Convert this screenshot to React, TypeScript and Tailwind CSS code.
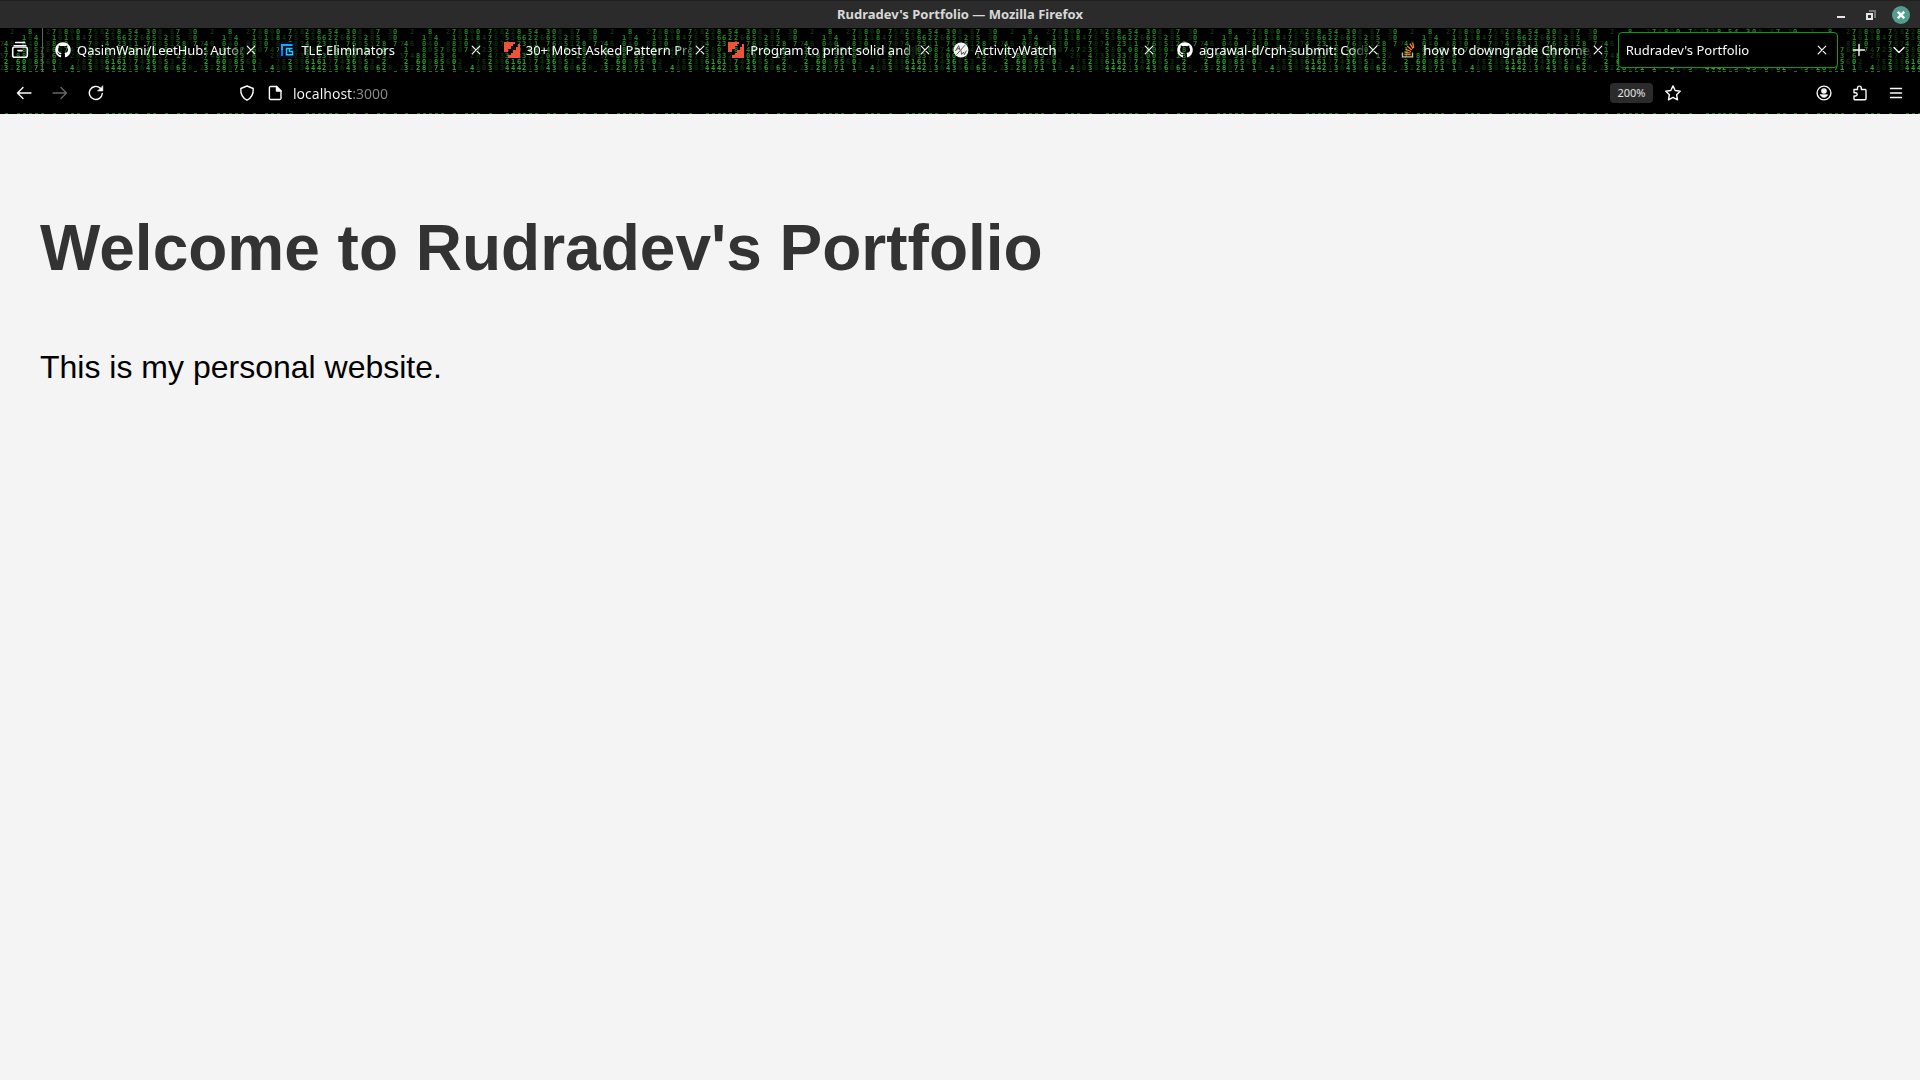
import React from "react";
import { FaGithub } from "react-icons/fa";

const STEP = 6;

/* Digit rain: one entry per column, "x" position, digits from top to bottom, brightness. */
const rain: { x: number; digits: string; dim?: boolean }[] = [
  { x: 0, digits: "  7 5 2", dim: true },
  { x: 6, digits: "  41723" },
  { x: 12, digits: "2 6 4 2", dim: true },
  { x: 18, digits: "    862" },
  { x: 24, digits: " 108808" },
  { x: 30, digits: "8      " },
  { x: 30, digits: " 640 00", dim: true },
  { x: 36, digits: " 405587" },
  { x: 42, digits: "   7351" },
  { x: 48, digits: "2 86 6 ", dim: true },
  { x: 54, digits: "7186601" },
  { x: 60, digits: "6630 26", dim: true },
  { x: 66, digits: "8107   " },
  { x: 72, digits: "01 42  ", dim: true },
  { x: 72, digits: "      4" },
  { x: 78, digits: "08 7   " },
  { x: 78, digits: "  6 678", dim: true },
  { x: 84, digits: " 4 2 60", dim: true },
  { x: 90, digits: "7773423" },
  { x: 96, digits: "5585738", dim: true },
  { x: 102, digits: "8 7 383", dim: true },
  { x: 107, digits: "2545364" },
  { x: 113, digits: "     14" },
  { x: 113, digits: "25 86  ", dim: true },
  { x: 119, digits: "8620364" },
  { x: 124, digits: " 63 312" },
  { x: 130, digits: "52 0   " },
  { x: 130, digits: "  1 271", dim: true },
  { x: 136, digits: "4218873" },
  { x: 142, digits: " 6 7246", dim: true },
  { x: 148, digits: "3674034" },
  { x: 154, digits: "0560063" },
  { x: 160, digits: "8680268", dim: true },
  { x: 166, digits: " 250756" },
  { x: 172, digits: "6814 30", dim: true },
  { x: 178, digits: "752 1 6" },
  { x: 184, digits: "  88322" },
  { x: 190, digits: "35  2 8", dim: true },
  { x: 195, digits: "007    " },
];

function DigitRain() {
  return (
    <svg className="absolute inset-0 size-full" aria-hidden="true">
      <defs>
        <pattern id="rain" width="200" height="86" patternUnits="userSpaceOnUse">
          <g fontFamily="'DejaVu Sans Mono', monospace" fontSize="7" fontWeight="700" textAnchor="middle">
            {rain.map((col, i) =>
              col.digits.split("").map((d, row) =>
                d === " " ? null : (
                  <text
                    key={`${i}-${row}`}
                    x={col.x || 2}
                    y={6 + row * STEP}
                    fill={col.dim ? "#0c300c" : row > 4 ? "#2aa32e" : "#208426"}
                  >
                    {d}
                  </text>
                ),
              ),
            )}
            {rain
              .filter((c) => !c.dim)
              .map((c) => (
                <g key={c.x} fill="#1c6f20">
                  <rect x={c.x - 1} y="43" width="3" height="1" />
                  <rect x={c.x - 1} y="85" width="3" height="1" />
                </g>
              ))}
          </g>
        </pattern>
      </defs>
      <rect width="100%" height="100%" fill="url(#rain)" />
    </svg>
  );
}

type IconProps = { size?: number; children: React.ReactNode; className?: string };

function Icon({ size = 16, children, className }: IconProps) {
  return (
    <svg
      width={size}
      height={size}
      viewBox={`0 0 ${size} ${size}`}
      fill="none"
      stroke="currentColor"
      strokeWidth="1.4"
      strokeLinecap="round"
      strokeLinejoin="round"
      className={className}
      aria-hidden="true"
    >
      {children}
    </svg>
  );
}

const CloseIcon = () => (
  <Icon size={10}>
    <path d="M1.2 1.2l7.6 7.6M8.8 1.2L1.2 8.8" strokeWidth="1.2" />
  </Icon>
);

const TleIcon = () => (
  <svg width="16" height="16" viewBox="0 0 16 16" aria-hidden="true">
    <rect width="16" height="16" rx="1" fill="#060b2c" />
    <path d="M2 3h11.500M3 3v10.500" stroke="#18a8ee" strokeWidth="2" fill="none" />
    <path d="M13.500 6.500H7.500v6.200h6V9.500H10.500V6.500" stroke="#1fd0f0" strokeWidth="1.500" fill="none" />
    <path d="M2 14V8h2v6z" fill="#1670f0" />
  </svg>
);

const StepsIcon = () => (
  <svg width="16" height="16" viewBox="0 0 16 16" aria-hidden="true">
    <path d="M0 0h11v2H9v2H7v3H4v3H0z" fill="#f1503a" />
    <path d="M16 16H4v-3h3v-2h2V8h3V5h2V2h2z" fill="#f1503a" />
  </svg>
);

const WatchIcon = () => (
  <svg width="16" height="16" viewBox="0 0 16 16" aria-hidden="true">
    <circle cx="8" cy="8" r="7.5" fill="#f4f4f4" />
    <path
      d="M2.5 9l3.2-5.4L6.8 8M3.6 7.2l3-.8M12 3.2L3.6 12.6M8 8.5l.6 4 2-2.4.8 2.6 2-4.2"
      stroke="#333"
      strokeWidth=".8"
      fill="none"
    />
  </svg>
);

const StackIcon = () => (
  <svg width="16" height="16" viewBox="0 0 16 16" fill="none" aria-hidden="true">
    <path d="M1.5 10.5v4.3h10v-4.3" stroke="#bcbbbb" strokeWidth="1.3" />
    <path
      d="M3.4 12.6h6.2M3.5 10.1l6.1 1M4.4 7.2l5.7 2.3M6.2 4.2l4.7 3.8M8.8 1.7l3.3 5M11.7.5l1 5.5"
      stroke="#f48024"
      strokeWidth="1.3"
    />
  </svg>
);

const GithubIcon = () => <FaGithub size={16} color="#ffffff" aria-hidden="true" />;

const tabs: { title: string; icon?: () => React.ReactElement; active?: boolean }[] = [
  { title: "QasimWani/LeetHub: Autom", icon: GithubIcon },
  { title: "TLE Eliminators", icon: TleIcon },
  { title: "30+ Most Asked Pattern Pro", icon: StepsIcon },
  { title: "Program to print solid and h", icon: StepsIcon },
  { title: "ActivityWatch", icon: WatchIcon },
  { title: "agrawal-d/cph-submit: Code", icon: GithubIcon },
  { title: "how to downgrade Chrome", icon: StackIcon },
  { title: "Rudradev's Portfolio", active: true },
];

function TitleBar() {
  return (
    <header className="relative flex h-7 items-center justify-center border-t border-[#1f1f1f] bg-[#2b2b2b] text-[13px] font-bold text-[#d8d8d8]">
      <h2>Rudradev's Portfolio — Mozilla Firefox</h2>
      <div className="absolute inset-y-0 right-[10px] flex items-center gap-3">
        <button aria-label="Minimize" className="flex size-[18px] items-center justify-center">
          <svg width="10" height="10" aria-hidden="true">
            <rect x="1" y="6" width="8" height="2" fill="#e6e6e6" />
          </svg>
        </button>
        <button aria-label="Restore" className="flex size-[18px] items-center justify-center">
          <svg width="10" height="10" fill="none" aria-hidden="true">
            <path d="M3 1h6v6H8" stroke="#777" strokeWidth="2" />
            <rect x="1" y="4" width="5" height="5" fill="#2b2b2b" stroke="#e6e6e6" strokeWidth="2" />
          </svg>
        </button>
        <button aria-label="Close window" className="flex size-[18px] items-center justify-center rounded-full bg-[#539d8f]">
          <svg width="8" height="8" stroke="#fff" strokeWidth="2.4" aria-hidden="true">
            <path d="M.8.8l6.4 6.4M7.2.8L.8 7.2" />
          </svg>
        </button>
      </div>
    </header>
  );
}

function TabStrip() {
  return (
    <div className="relative flex h-11 items-center">
      <button aria-label="Recent browsing" className="flex h-9 w-10 shrink-0 items-center justify-center">
        <Icon size={18}>
          <path d="M4.5 1.5h9" />
          <path d="M3 4.5h12" strokeWidth="1.2" />
          <rect x="1.7" y="6" width="14.6" height="10.3" rx="2" strokeWidth="1.6" />
          <path d="M7 9.6h4" strokeWidth="1.6" />
        </Icon>
      </button>
      <div className="mx-0.5 h-full w-px bg-[#5c665c]" />
      <div role="tablist" className="flex min-w-0 flex-1">
        {tabs.map((tab) => (
          <div key={tab.title} className="min-w-0 flex-1 px-0.5">
            <div
              className={
                tab.active
                  ? "flex h-9 items-center rounded border border-[#0e9a0e] bg-black pr-[10px] pl-[7px]"
                  : "flex h-9 items-center pr-[11px] pl-2"
              }
            >
              <button role="tab" aria-selected={!!tab.active} className="flex min-w-0 flex-1 items-center gap-1.5 text-left">
                {tab.icon && (
                  <span className="shrink-0">
                    <tab.icon />
                  </span>
                )}
                <span className="min-w-0 flex-1 overflow-hidden mask-r-from-[calc(100%-20px)] mask-r-to-100% pt-0.5 whitespace-nowrap">
                  {tab.title}
                </span>
              </button>
              <button aria-label={`Close ${tab.title}`} className="shrink-0">
                <CloseIcon />
              </button>
            </div>
          </div>
        ))}
      </div>
      <button aria-label="New tab" className="flex h-9 w-[38px] shrink-0 items-center justify-center">
        <Icon size={14}>
          <path d="M7 1.5v11M1.5 7h11" />
        </Icon>
      </button>
      <button aria-label="List all tabs" className="flex h-9 w-[42px] shrink-0 items-center justify-center">
        <Icon size={14}>
          <path d="M2 4.5l5 5 5-5" />
        </Icon>
      </button>
    </div>
  );
}

function ToolButton({ label, children, muted }: { label: string; children: React.ReactNode; muted?: boolean }) {
  return (
    <button
      aria-label={label}
      className={
        muted
          ? "flex h-8 w-9 shrink-0 items-center justify-center text-[#666]"
          : "flex h-8 w-9 shrink-0 items-center justify-center"
      }
    >
      <Icon>{children}</Icon>
    </button>
  );
}

function NavBar() {
  return (
    <nav className="relative mb-px flex h-[41px] items-center bg-black px-1.5">
      <ToolButton label="Back">
        <path d="M15 8H1.5M7 2.5L1.5 8 7 13.5" />
      </ToolButton>
      <ToolButton label="Forward" muted>
        <path d="M1 8h13.5M9 2.5L14.500 8 9 13.500" />
      </ToolButton>
      <ToolButton label="Reload">
        <path d="M14.300 8.500a6.500 6.500 0 1 1-2-5.300" />
        <path d="M14.800 1v5h-5z" fill="currentColor" strokeWidth=".6" />
      </ToolButton>
      <div className="mx-[115px] flex min-w-0 flex-1 items-center">
        <ToolButton label="Tracking protection">
          <path d="M8 1l6.200 2.500c.3 5-1.700 9.500-6.200 11.700C3.500 13 1.500 8.500 1.800 3.500z" />
        </ToolButton>
        <button aria-label="Site information" className="flex h-8 w-5 shrink-0 items-center justify-center">
          <Icon>
            <path d="M3.800 1.500h5.700L14 6v7.200a1.300 1.300 0 0 1-1.300 1.300h-9a1.300 1.300 0 0 1-1.300-1.300V2.800a1.300 1.300 0 0 1 1.400-1.300z" />
            <path d="M9.500 1.500V6H14z" fill="currentColor" />
          </Icon>
        </button>
        <input
          aria-label="Address"
          defaultValue="localhost:3000"
          className="ml-2 min-w-0 flex-1 bg-linear-to-r from-[#fbfbfe] from-[60px] to-[#8a8a8a] to-[60px] bg-clip-text pt-0.5 text-sm text-transparent outline-none"
        />
        <button className="h-5 w-[43px] shrink-0 rounded bg-[#2b2b2b] pt-0.5 text-[11px] text-[#e6e6e6]">200%</button>
        <span className="ml-0.5">
          <ToolButton label="Bookmark this page">
            <path d="M8 .9l2.200 4.600 5 .7-3.600 3.500.9 5.100L8 12.400l-4.500 2.400.9-5.100L.8 6.200l5-.7z" />
          </ToolButton>
        </span>
      </div>
      <ToolButton label="Account">
        <circle cx="8" cy="8" r="6.900" />
        <circle cx="8" cy="6" r="2.100" fill="currentColor" />
        <path d="M4.500 9.800h7C11 11.400 9.700 12.300 8 12.300S5 11.400 4.500 9.800z" fill="currentColor" strokeWidth=".8" />
      </ToolButton>
      <ToolButton label="Extensions">
        <path d="M2 4.500h3.500V3a1.900 1.900 0 0 1 3.800 0v1.500H13a1 1 0 0 1 1 1v8.300a1 1 0 0 1-1 1H3a1 1 0 0 1-1-1V11h1.500a1.600 1.600 0 0 0 0-3.300H2z" />
      </ToolButton>
      <ToolButton label="Menu">
        <path d="M2.500 3.500h11M2.500 8h11M2.500 12.500h11" />
      </ToolButton>
    </nav>
  );
}

export default function App() {
  return (
    <div className="flex min-h-screen flex-col bg-[#f4f4f4] font-['Noto_Sans',sans-serif]">
      <TitleBar />
      <div className="relative bg-black text-[13px] text-[#fbfbfe]">
        <DigitRain />
        <TabStrip />
        <NavBar />
      </div>
      <main className="flex flex-1 flex-col gap-16 px-10 pt-[97px] font-['Liberation_Sans',Arial,sans-serif]">
        <h1 className="text-[64px] leading-[74px] font-bold text-[#333]">Welcome to Rudradev's Portfolio</h1>
        <p className="text-[32px] leading-9 text-black">This is my personal website.</p>
      </main>
    </div>
  );
}
